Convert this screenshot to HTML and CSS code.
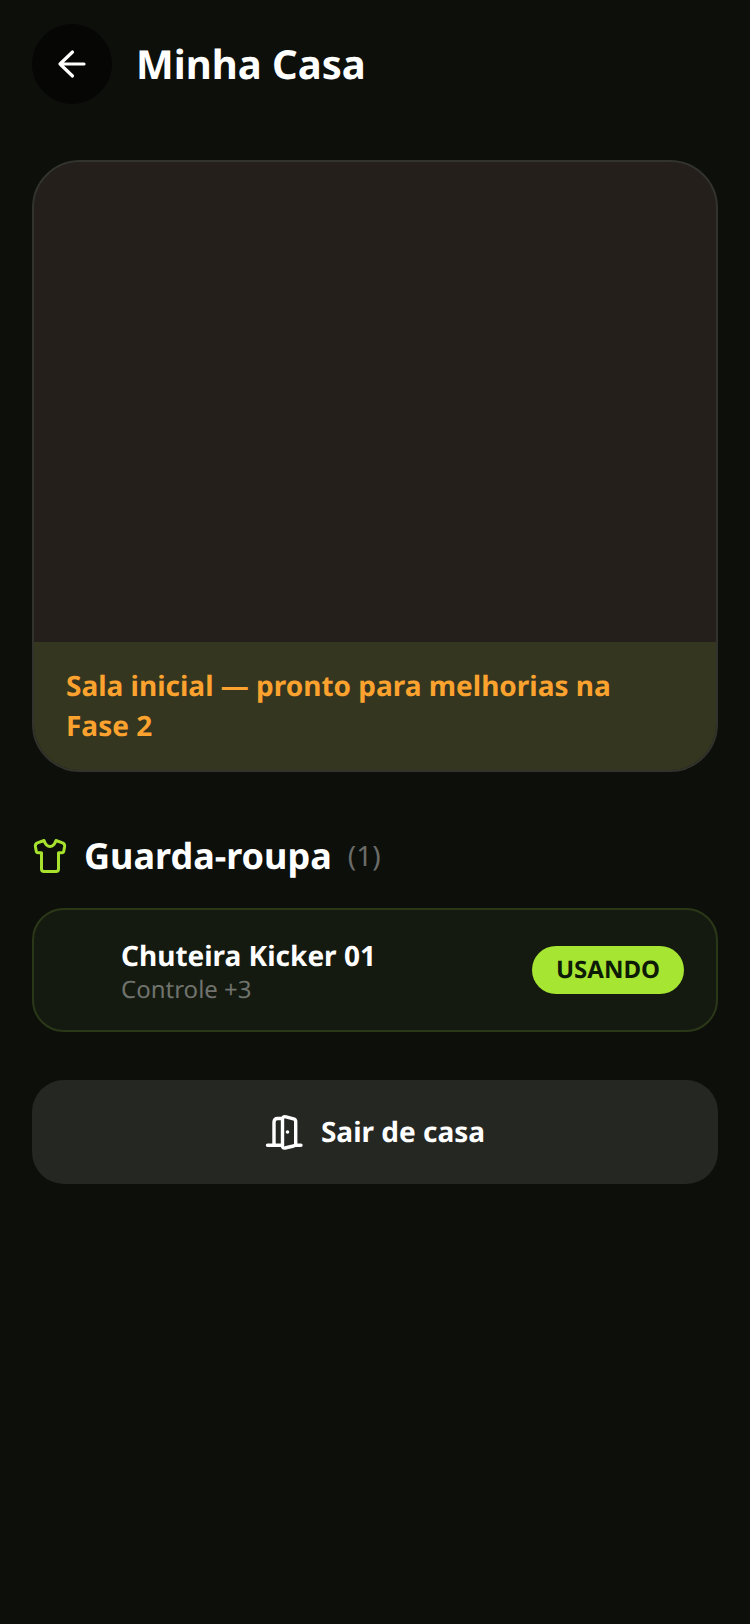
FILE: index.html
```html
<!DOCTYPE html>
<html lang="pt-BR">
<head>
	<meta charset="UTF-8">
	<meta name="viewport" content="width=device-width, initial-scale=1">
	<title>Minha Casa</title>
	<link rel="stylesheet" href="styles.css">
</head>
<body>

	<header class="header">
		<button class="back" type="button" aria-label="Voltar">
			<svg class="icon-back" viewBox="0 0 40 40" fill="none" stroke="currentColor" stroke-width="3.2" stroke-linecap="round" stroke-linejoin="round"><path d="M32 20H8M20.5 8L8 20l12.500 12"/></svg>
		</button>
		<h1 class="title">Minha Casa</h1>
	</header>

	<main class="content">
		<section class="room">
			<div class="room-scene"></div>
			<p class="room-caption">Sala inicial — pronto para melhorias na Fase&nbsp;2</p>
		</section>

		<section class="wardrobe">
			<h2 class="wardrobe-title">
				<svg class="icon-shirt" viewBox="0 0 36 36" fill="none" stroke="currentColor" stroke-width="3" stroke-linecap="round" stroke-linejoin="round"><path d="M12 2.500L5.500 4.800Q3 5.800 3.400 8.500L4.200 13q.3 1.800 2 1.800H9.500V31q0 2.500 2.500 2.500h12q2.500 0 2.500-2.500V14.800h3.300q1.700 0 2-1.800l.8-4.500Q33 5.800 30.500 4.800L24 2.500q-2 6-6 6t-6-6z"/></svg>
				Guarda-roupa
				<span class="wardrobe-count">(1)</span>
			</h2>
			<ul class="items">
				<li class="item">
					<span class="item-thumb"></span>
					<div class="item-info">
						<p class="item-name">Chuteira Kicker 01</p>
						<p class="item-bonus">Controle +3</p>
					</div>
					<button class="item-status" type="button">USANDO</button>
				</li>
			</ul>
		</section>

		<button class="leave" type="button">
			<svg class="icon-door" viewBox="0 0 40 40" fill="none" stroke="currentColor" stroke-width="3.4" stroke-linecap="round" stroke-linejoin="round"><path d="M2.500 33.300H17M31 33.300h5M9 33V10q0-3.500 3.500-3.500H17M17.500 7.500V34q0 2.500 2.500 2l8.500-2q2.200-.5 2.200-2.500V9.500q0-2-2.200-2.600L21 4.800q-3.500-.8-3.500 2.700z"/><circle cx="22.500" cy="20" r="1.800" fill="currentColor" stroke="none"/></svg>
			Sair de casa
		</button>
	</main>

</body>
</html>
```

FILE: styles.css
```css
*{margin: 0;padding: 0;box-sizing: border-box;}
body{min-height: 100vh;background-color: #0d0f0b;color: #fff;font-family: "Noto Sans", sans-serif;font-size: 28px;line-height: 40px;text-rendering: geometricPrecision;}
button{border: none;color: inherit;font: inherit;font-weight: 700;text-rendering: inherit;cursor: pointer;}
li{list-style: none;}
svg{display: block;flex: none;}

.header{display: flex;align-items: center;gap: 24px;padding: 24px 32px;}
.back{display: flex;align-items: center;justify-content: center;width: 80px;height: 80px;border-radius: 50%;background-color: #060605;}
.icon-back{width: 40px;height: 40px;}
.title{font-size: 40px;line-height: 56px;}

.content{display: flex;flex-direction: column;gap: 48px;padding: 32px;}

.room{border: 2px solid #33332d;border-radius: 48px;background-color: #241f1b;overflow: hidden;}
.room-scene{height: 480px;}
.room-caption{padding: 24px 32px;background-color: #34361f;color: #fba22f;font-weight: 700;}

.wardrobe{display: flex;flex-direction: column;gap: 24px;padding-top: 8px;}
.wardrobe-title{display: flex;align-items: center;gap: 16px;font-size: 36px;line-height: 56px;}
.icon-shirt{width: 36px;height: 36px;color: #a6e22e;}
.wardrobe-count{color: #6b6c69;font-size: 28px;font-weight: 400;}

.item{display: flex;align-items: center;gap: 24px;padding: 24px 32px;border: 2px solid #2b3818;border-radius: 32px;background-color: #151a11;}
.item-thumb{width: 31px;height: 72px;}
.item-info{flex: 1;}
.item-name{font-weight: 700;}
.item-bonus{color: #70736d;font-size: 24px;line-height: 28px;}
.item-status{padding: 8px 24px;border-radius: 24px;background-color: #a6e532;color: #0d1a05;font-size: 24px;line-height: 32px;}

.leave{display: flex;align-items: center;justify-content: center;gap: 16px;padding: 32px;border-radius: 32px;background-color: #252723;}
.icon-door{width: 40px;height: 40px;}
```
